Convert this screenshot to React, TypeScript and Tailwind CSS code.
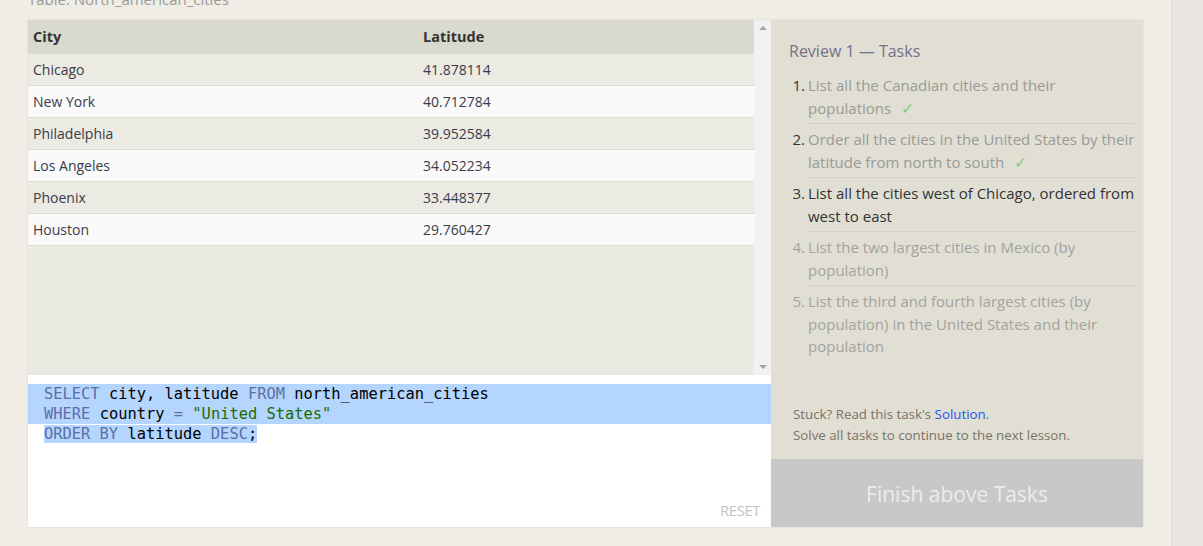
import React from "react";

const rows: [string, string][] = [
  ["Chicago", "41.878114"],
  ["New York", "40.712784"],
  ["Philadelphia", "39.952584"],
  ["Los Angeles", "34.052234"],
  ["Phoenix", "33.448377"],
  ["Houston", "29.760427"],
];

const font = { fontFamily: '"Open Sans", "Noto Sans", sans-serif' };

function Check() {
  return <span className="ml-[10px] text-[16px] text-[#86cc86]">✓</span>;
}

export default function App() {
  return (
    <div className="relative h-[546px] w-[1203px] overflow-hidden bg-[#f0ede6]" style={font}>
      <div className="absolute right-0 top-0 h-full w-[32px] border-l border-[#dedad6] bg-[#e9e5e2]" />
      <div className="absolute left-[28px] top-[-12px] text-[15px] text-[#999]">Table: North_american_cities</div>
      <div className="absolute left-[27px] top-[19px] flex h-[509px] w-[1117px] border border-[#e6e4dc]">
        {/* left pane */}
        <div className="flex w-[743px] flex-col">
          <div className="flex h-[355px]">
            <div className="flex flex-1 flex-col bg-[#eae9e2]">
              <div className="flex h-[34px] items-center bg-[#dad9cd] text-[14.5px] font-bold text-[#333]">
                <div className="w-[395px] pl-[5px]">City</div>
                <div>Latitude</div>
              </div>
              {rows.map(([c, l], i) => (
                <div
                  key={c}
                  className={`flex h-[32px] items-center border-b border-[#dedcd5] text-[14px] text-[#3b3b4a] ${
                    i % 2 === 0 ? "bg-[#ebeae3]" : "bg-[#fafafa]"
                  }`}
                >
                  <div className="w-[395px] pl-[5px]">{c}</div>
                  <div>{l}</div>
                </div>
              ))}
            </div>
            <div className="flex w-[17px] flex-col items-center justify-between bg-[#f1f1f1] py-[6px]">
              <div className="h-0 w-0 border-x-[4px] border-b-[4px] border-x-transparent border-b-[#a3a3a3]" />
              <div className="h-0 w-0 border-x-[4px] border-t-[4px] border-x-transparent border-t-[#a3a3a3]" />
            </div>
          </div>
          <div className="relative flex-1 bg-white pt-[9px]">
            <div
              className="text-[15.4px] leading-[20px]"
              style={{ fontFamily: '"DejaVu Sans Mono", "Liberation Mono", monospace' }}
            >
              <div className="bg-[#b4d5fe] pl-[16px]">
                <span className="text-[#5d6ea8]">SELECT</span> <span className="text-black">city, latitude</span>{" "}
                <span className="text-[#5d6ea8]">FROM</span> <span className="text-black">north_american_cities</span>
              </div>
              <div className="bg-[#b4d5fe] pl-[16px]">
                <span className="text-[#5d6ea8]">WHERE</span> <span className="text-black">country</span>{" "}
                <span className="text-[#5d6ea8]">=</span> <span className="text-[#1c6a05]">"United States"</span>
              </div>
              <div className="pl-[16px]">
                <span className="bg-[#b4d5fe]">
                  <span className="text-[#5d6ea8]">ORDER BY</span> <span className="text-black">latitude</span>{" "}
                  <span className="text-[#5d6ea8]">DESC</span>
                  <span className="text-black">;</span>
                </span>
              </div>
            </div>
            <div className="absolute bottom-[6px] right-[11px] text-[15px] tracking-[-0.5px] text-[#c4c4c4]">RESET</div>
          </div>
        </div>
        {/* right pane */}
        <div className="flex flex-1 flex-col bg-[#e1dfd4]">
          <div className="flex-1 pl-[18px] pr-[8px] pt-[19px]">
            <div className="text-[16px] text-[#71718a]">Review 1 — Tasks</div>
            <ol className="mt-[7px] text-[15px] leading-[22.5px]">
              {[
                { t: <>List all the Canadian cities and their populations<Check /></>, c: "text-[#9a9a96]", n: "text-[#333]" },
                { t: <>Order all the cities in the United States by their latitude from north to south<Check /></>, c: "text-[#9a9a96]", n: "text-[#333]" },
                { t: <>List all the cities west of Chicago, ordered from west to east</>, c: "text-[#333]", n: "text-[#333]" },
                { t: <>List the two largest cities in Mexico (by population)</>, c: "text-[#a3a3a0]", n: "text-[#a3a3a0]" },
                { t: <>List the third and fourth largest cities (by population) in the United States and their population</>, c: "text-[#a3a3a0]", n: "text-[#a3a3a0]" },
              ].map((it, i, arr) => (
                <li key={i} className="flex">
                  <span className={`w-[19px] shrink-0 text-right pr-[3px] pt-[4px] ${it.n}`}>{i + 1}.</span>
                  <span
                    className={`flex-1 pb-[4px] pt-[4px] ${it.c} ${i < arr.length - 1 ? "border-b border-[#d3d1c6]" : ""}`}
                  >
                    {it.t}
                  </span>
                </li>
              ))}
            </ol>
          </div>
          <div className="pb-[13px] pl-[22px] text-[13.3px] leading-[21px] text-[#7b7266]">
            <div>
              Stuck? Read this task's <span className="text-[#2156f0]">Solution</span>.
            </div>
            <div>Solve all tasks to continue to the next lesson.</div>
          </div>
          <div className="flex h-[68px] items-center justify-center bg-[#c8c8c8] pt-[4px] text-[21px] text-[#ececec]">
            Finish above Tasks
          </div>
        </div>
      </div>
    </div>
  );
}
